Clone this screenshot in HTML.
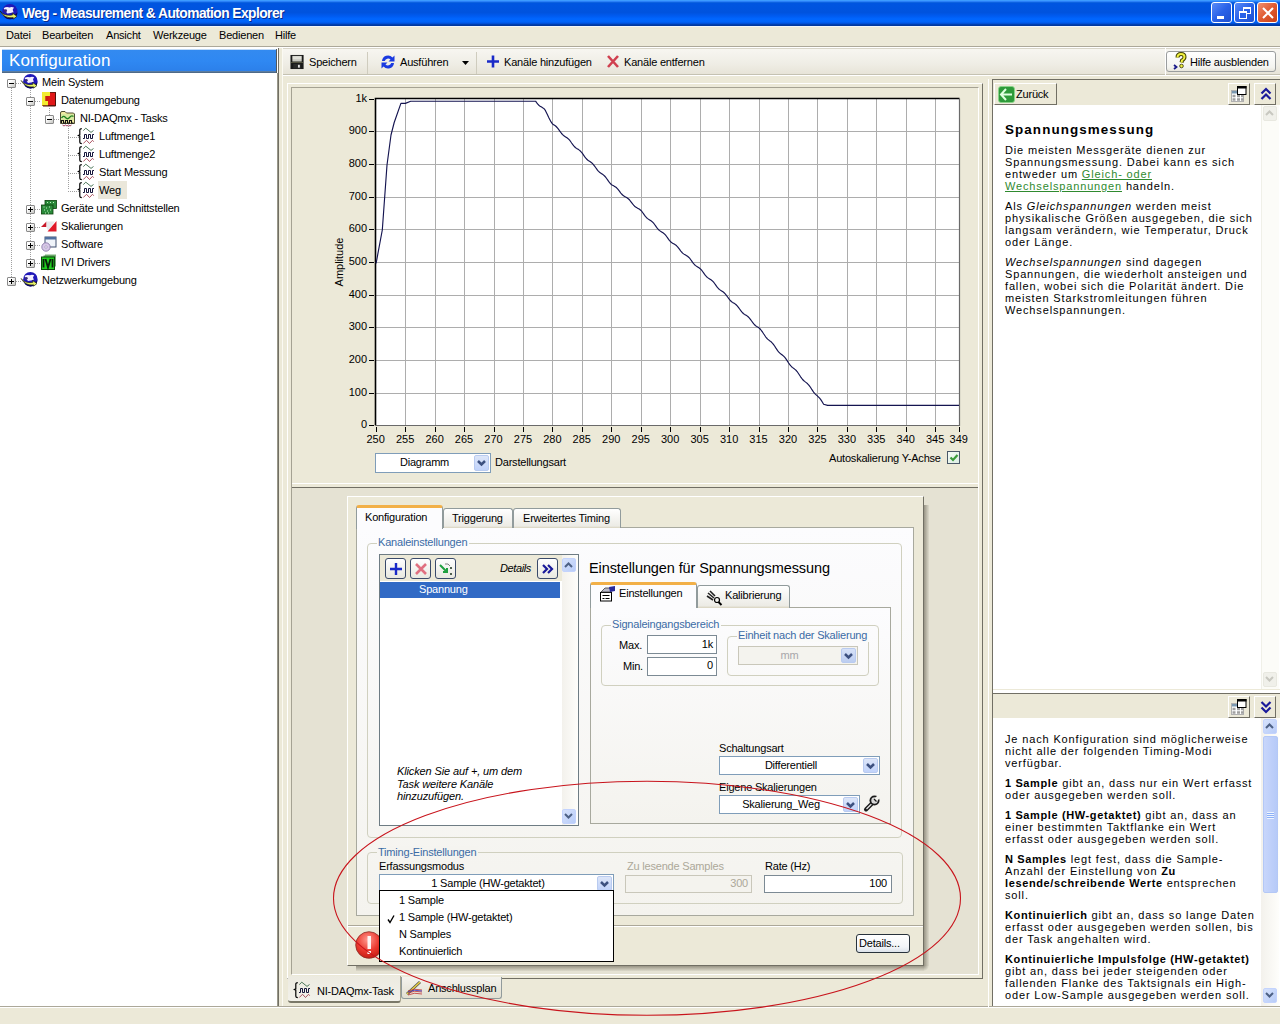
<!DOCTYPE html><html><head><meta charset="utf-8"><title>Weg - Measurement &amp; Automation Explorer</title><style>
*{margin:0;padding:0;box-sizing:border-box}
html,body{width:1280px;height:1024px;overflow:hidden;background:#ECE9D8;font-family:"Liberation Sans",sans-serif;font-size:11px;color:#000}
.ab{position:absolute}
.t{position:absolute;white-space:nowrap;font-size:11px;letter-spacing:-0.2px;line-height:13px}
.hl{position:absolute;white-space:nowrap;font-size:11px;letter-spacing:0.85px;line-height:12px}
.hl b{letter-spacing:0.62px}
svg{position:absolute;overflow:visible}
</style></head><body>
<div class="ab" style="left:0px;top:0px;width:1280px;height:26px;background:linear-gradient(#3D9BFF 0.5px,#2A80F8 1.5px,#0C62E0 2.5px,#0055E0 3.5px,#0053DE 12.5px,#005BF0 16px,#0066FF 19px,#0063F8 22px,#0050D8 23.5px,#0040B0 24.5px,#0038A0 25.5px)"></div>
<svg style="left:1px;top:4px" width="17" height="17" viewBox="0 0 16 16"><circle cx="8.4" cy="7.2" r="7.2" fill="#2018B8"/><path d="M1.5 9 Q8 15 15.5 8 Q15 14.5 8.4 14.4 Q3 14.4 1.5 9Z" fill="#0A0860"/>
<path d="M2.5 4 Q5 2.3 8 3.3 L10 2.8 L12.2 3.3 L11 5.3 L11.8 7.8 L9 8.5 L6 9 L4.5 7 Z" fill="#F4F0FF"/>
<circle cx="4.3" cy="6.3" r="1.4" fill="#3A2A7A"/>
<path d="M-0.8 6.5 Q2 11 9 10.6 L11 10.2 L10.5 8.4 L15 11.6 L11.5 14.2 L11.5 12.8 Q3 14 -0.8 6.5Z" fill="#E8F468" stroke="#1A1A10" stroke-width="0.6"/></svg>
<div class="t" style="left:22px;top:6px;font-weight:bold;font-size:13.8px;color:#fff;letter-spacing:-0.56px;line-height:15px;text-shadow:1px 1px 0 #0A2A8A">Weg - Measurement &amp; Automation Explorer</div>
<div class="ab" style="left:1211px;top:2px;width:21px;height:21px;border:1px solid #fff;border-radius:3px;background:linear-gradient(135deg,#5A8CF8,#2A62E8 50%,#1E50D0)"><div class="ab" style="left:5px;top:13px;width:7px;height:3px;background:#fff"></div></div>
<div class="ab" style="left:1234px;top:2px;width:21px;height:21px;border:1px solid #fff;border-radius:3px;background:linear-gradient(135deg,#5A8CF8,#2A62E8 50%,#1E50D0)"><div class="ab" style="left:8px;top:4px;width:8px;height:7px;border:1px solid #fff;border-top-width:2px"></div><div class="ab" style="left:4px;top:8px;width:8px;height:8px;border:1px solid #fff;border-top-width:2px;background:#2A62E8"></div></div>
<div class="ab" style="left:1257px;top:2px;width:21px;height:21px;border:1px solid #fff;border-radius:3px;background:linear-gradient(135deg,#F09070,#E05A30 50%,#C84018)"><svg style="left:4px;top:4px" width="12" height="12"><path d="M1 1L11 11M11 1L1 11" stroke="#fff" stroke-width="2"/></svg></div>
<div class="ab" style="left:0px;top:26px;width:1280px;height:20px;background:#ECE9D8;border-top:1px solid #F2F6F8"></div>
<div class="t" style="left:6px;top:29px;">Datei</div>
<div class="t" style="left:42px;top:29px;">Bearbeiten</div>
<div class="t" style="left:106px;top:29px;">Ansicht</div>
<div class="t" style="left:153px;top:29px;">Werkzeuge</div>
<div class="t" style="left:219px;top:29px;">Bedienen</div>
<div class="t" style="left:275px;top:29px;">Hilfe</div>
<div class="ab" style="left:0px;top:46px;width:1280px;height:1px;background:#ACA899"></div>
<div class="ab" style="left:0px;top:47px;width:1280px;height:1px;background:#fff"></div>
<div class="ab" style="left:0px;top:48px;width:278px;height:958px;background:#fff"></div>
<div class="ab" style="left:2px;top:49px;width:275px;height:24px;background:linear-gradient(#C0DAF6 0px,#C0DAF6 1px,#338AF0 1px,#2F88F2 12px,#2C80EA 22px,#6A90B8 22px,#4E6A88 23px);border-right:1px solid #50585C"></div>
<div class="t" style="left:9px;top:51px;font-size:17px;letter-spacing:0.1px;line-height:19px;color:#fff">Konfiguration</div>
<div class="ab" style="left:277px;top:73px;width:1px;height:933px;background:#9A988A"></div>
<div class="ab" style="left:278px;top:48px;width:1px;height:958px;background:#716F64"></div>
<div class="ab" style="left:282px;top:48px;width:1px;height:958px;background:#FBFAF3"></div>
<div class="ab" style="left:11px;top:88px;width:1px;height:192px;background:repeating-linear-gradient(#A0A0A0 0 1px,transparent 1px 2px)"></div>
<div class="ab" style="left:30px;top:90px;width:1px;height:172px;background:repeating-linear-gradient(#A0A0A0 0 1px,transparent 1px 2px)"></div>
<div class="ab" style="left:49px;top:108px;width:1px;height:11px;background:repeating-linear-gradient(#A0A0A0 0 1px,transparent 1px 2px)"></div>
<div class="ab" style="left:68px;top:126px;width:1px;height:64px;background:repeating-linear-gradient(#A0A0A0 0 1px,transparent 1px 2px)"></div>
<div class="ab" style="left:16px;top:83px;width:6px;height:1px;background:repeating-linear-gradient(90deg,#A0A0A0 0 1px,transparent 1px 2px)"></div>
<div class="ab" style="left:35px;top:101px;width:6px;height:1px;background:repeating-linear-gradient(90deg,#A0A0A0 0 1px,transparent 1px 2px)"></div>
<div class="ab" style="left:54px;top:119px;width:6px;height:1px;background:repeating-linear-gradient(90deg,#A0A0A0 0 1px,transparent 1px 2px)"></div>
<div class="ab" style="left:68px;top:137px;width:12px;height:1px;background:repeating-linear-gradient(90deg,#A0A0A0 0 1px,transparent 1px 2px)"></div>
<div class="ab" style="left:68px;top:155px;width:12px;height:1px;background:repeating-linear-gradient(90deg,#A0A0A0 0 1px,transparent 1px 2px)"></div>
<div class="ab" style="left:68px;top:173px;width:12px;height:1px;background:repeating-linear-gradient(90deg,#A0A0A0 0 1px,transparent 1px 2px)"></div>
<div class="ab" style="left:68px;top:191px;width:12px;height:1px;background:repeating-linear-gradient(90deg,#A0A0A0 0 1px,transparent 1px 2px)"></div>
<div class="ab" style="left:35px;top:209px;width:6px;height:1px;background:repeating-linear-gradient(90deg,#A0A0A0 0 1px,transparent 1px 2px)"></div>
<div class="ab" style="left:35px;top:227px;width:6px;height:1px;background:repeating-linear-gradient(90deg,#A0A0A0 0 1px,transparent 1px 2px)"></div>
<div class="ab" style="left:35px;top:245px;width:6px;height:1px;background:repeating-linear-gradient(90deg,#A0A0A0 0 1px,transparent 1px 2px)"></div>
<div class="ab" style="left:35px;top:263px;width:6px;height:1px;background:repeating-linear-gradient(90deg,#A0A0A0 0 1px,transparent 1px 2px)"></div>
<div class="ab" style="left:16px;top:281px;width:6px;height:1px;background:repeating-linear-gradient(90deg,#A0A0A0 0 1px,transparent 1px 2px)"></div>
<div class="ab" style="left:7px;top:79px;width:9px;height:9px;border:1px solid #8A8A8A;border-radius:1px;background:linear-gradient(135deg,#fff 30%,#C4C4C0)"><div class="ab" style="left:1px;top:3px;width:5px;height:1px;background:#000"></div></div>
<svg style="left:22px;top:74px" width="16" height="16" viewBox="0 0 16 16"><circle cx="8.4" cy="7.2" r="7.2" fill="#2018B8"/><path d="M1.5 9 Q8 15 15.5 8 Q15 14.5 8.4 14.4 Q3 14.4 1.5 9Z" fill="#0A0860"/>
<path d="M2.5 4 Q5 2.3 8 3.3 L10 2.8 L12.2 3.3 L11 5.3 L11.8 7.8 L9 8.5 L6 9 L4.5 7 Z" fill="#F4F0FF"/>
<circle cx="4.3" cy="6.3" r="1.4" fill="#3A2A7A"/>
<path d="M-0.8 6.5 Q2 11 9 10.6 L11 10.2 L10.5 8.4 L15 11.6 L11.5 14.2 L11.5 12.8 Q3 14 -0.8 6.5Z" fill="#E8F468" stroke="#1A1A10" stroke-width="0.6"/></svg>
<div class="t" style="left:42px;top:76px;">Mein System</div>
<div class="ab" style="left:26px;top:97px;width:9px;height:9px;border:1px solid #8A8A8A;border-radius:1px;background:linear-gradient(135deg,#fff 30%,#C4C4C0)"><div class="ab" style="left:1px;top:3px;width:5px;height:1px;background:#000"></div></div>
<svg style="left:41px;top:92px" width="16" height="16" viewBox="0 0 16 16"><rect x="1.5" y="0.5" width="13" height="13" fill="#E01818" stroke="#6A1A10" stroke-width="1"/><path d="M1 0H9V4H4.5V9H7V13.5H1Z" fill="#F2EC30"/><rect x="4.5" y="4" width="3" height="5" fill="#C82010"/><path d="M14.5 1V14H2" stroke="#501008" stroke-width="1" fill="none"/></svg>
<div class="t" style="left:61px;top:94px;">Datenumgebung</div>
<div class="ab" style="left:45px;top:115px;width:9px;height:9px;border:1px solid #8A8A8A;border-radius:1px;background:linear-gradient(135deg,#fff 30%,#C4C4C0)"><div class="ab" style="left:1px;top:3px;width:5px;height:1px;background:#000"></div></div>
<svg style="left:60px;top:110px" width="16" height="16" viewBox="0 0 16 16"><path d="M0.5 3 Q0.5 1.5 2 1.5 L5 1.5 L6.5 3 L13.5 3 L14.5 4 L14.5 13.5 L0.5 13.5Z" fill="#F0EAA0" stroke="#3A3A20" stroke-width="0.9"/>
<rect x="1" y="4" width="13" height="6" fill="#D8E8A0"/>
<path d="M1.5 8 Q3.5 5 5.5 7.5 T9.5 7.5 T13.5 6.5" stroke="#208020" fill="none" stroke-width="1.3"/>
<path d="M1.5 13 V10.5 H3.5 V13 H5.5 V10.5 H7.5 V13 H9.5 V10.5 H11.5 V13 H13.5" stroke="#101010" fill="none" stroke-width="1.1"/>
<path d="M2.5 15 L4 16 L5.5 15 L7 16 L8.5 15 L10 16 L11.5 15" stroke="#A03050" fill="none" stroke-width="0.9"/></svg>
<div class="t" style="left:80px;top:112px;">NI-DAQmx - Tasks</div>
<svg style="left:79px;top:129px" width="16" height="16" viewBox="0 0 16 16"><path d="M2.8 -0.4 Q0.8 -0.4 0.8 1 V5.8 L-0.6 6.5 L0.8 7.2 V13.2 Q0.8 14.6 2.8 14.6" stroke="#000" fill="none" stroke-width="1.2"/>
<path d="M4.3 1.6 L6.8 -0.8 L12 3.4 L14.5 1.5" stroke="#3A6A4A" fill="none" stroke-width="0.9"/>
<path d="M4 9.5 H5.5 V5.5 H7.5 V9.5 H9.5 V5.5 H11.5 V9.5 H13.5 V5.5 H15" stroke="#14143A" fill="none" stroke-width="1"/>
<path d="M4.3 14.5 L7.5 11.3 L10.5 14.5 L13.5 11.3 L14.7 12.7" stroke="#A04050" fill="none" stroke-width="0.9"/></svg>
<div class="t" style="left:99px;top:130px;">Luftmenge1</div>
<svg style="left:79px;top:147px" width="16" height="16" viewBox="0 0 16 16"><path d="M2.8 -0.4 Q0.8 -0.4 0.8 1 V5.8 L-0.6 6.5 L0.8 7.2 V13.2 Q0.8 14.6 2.8 14.6" stroke="#000" fill="none" stroke-width="1.2"/>
<path d="M4.3 1.6 L6.8 -0.8 L12 3.4 L14.5 1.5" stroke="#3A6A4A" fill="none" stroke-width="0.9"/>
<path d="M4 9.5 H5.5 V5.5 H7.5 V9.5 H9.5 V5.5 H11.5 V9.5 H13.5 V5.5 H15" stroke="#14143A" fill="none" stroke-width="1"/>
<path d="M4.3 14.5 L7.5 11.3 L10.5 14.5 L13.5 11.3 L14.7 12.7" stroke="#A04050" fill="none" stroke-width="0.9"/></svg>
<div class="t" style="left:99px;top:148px;">Luftmenge2</div>
<svg style="left:79px;top:165px" width="16" height="16" viewBox="0 0 16 16"><path d="M2.8 -0.4 Q0.8 -0.4 0.8 1 V5.8 L-0.6 6.5 L0.8 7.2 V13.2 Q0.8 14.6 2.8 14.6" stroke="#000" fill="none" stroke-width="1.2"/>
<path d="M4.3 1.6 L6.8 -0.8 L12 3.4 L14.5 1.5" stroke="#3A6A4A" fill="none" stroke-width="0.9"/>
<path d="M4 9.5 H5.5 V5.5 H7.5 V9.5 H9.5 V5.5 H11.5 V9.5 H13.5 V5.5 H15" stroke="#14143A" fill="none" stroke-width="1"/>
<path d="M4.3 14.5 L7.5 11.3 L10.5 14.5 L13.5 11.3 L14.7 12.7" stroke="#A04050" fill="none" stroke-width="0.9"/></svg>
<div class="t" style="left:99px;top:166px;">Start Messung</div>
<div class="ab" style="left:98px;top:181px;width:29px;height:18px;background:#EAE7DA"></div>
<svg style="left:79px;top:183px" width="16" height="16" viewBox="0 0 16 16"><path d="M2.8 -0.4 Q0.8 -0.4 0.8 1 V5.8 L-0.6 6.5 L0.8 7.2 V13.2 Q0.8 14.6 2.8 14.6" stroke="#000" fill="none" stroke-width="1.2"/>
<path d="M4.3 1.6 L6.8 -0.8 L12 3.4 L14.5 1.5" stroke="#3A6A4A" fill="none" stroke-width="0.9"/>
<path d="M4 9.5 H5.5 V5.5 H7.5 V9.5 H9.5 V5.5 H11.5 V9.5 H13.5 V5.5 H15" stroke="#14143A" fill="none" stroke-width="1"/>
<path d="M4.3 14.5 L7.5 11.3 L10.5 14.5 L13.5 11.3 L14.7 12.7" stroke="#A04050" fill="none" stroke-width="0.9"/></svg>
<div class="t" style="left:99px;top:184px;">Weg</div>
<div class="ab" style="left:26px;top:205px;width:9px;height:9px;border:1px solid #8A8A8A;border-radius:1px;background:linear-gradient(135deg,#fff 30%,#C4C4C0)"><div class="ab" style="left:1px;top:3px;width:5px;height:1px;background:#000"></div><div class="ab" style="left:3px;top:1px;width:1px;height:5px;background:#000"></div></div>
<svg style="left:41px;top:200px" width="16" height="16" viewBox="0 0 16 16"><rect x="4" y="0.5" width="11.5" height="8" fill="#2A8A3A" stroke="#0A400A" stroke-width="0.8"/><rect x="0.5" y="5" width="11.5" height="9" fill="#2A8A3A" stroke="#0A400A" stroke-width="0.8"/>
<path d="M6 2.5h1M9 2.5h1M12 2.5h1M2.5 7h1M5 8h1M8 7h1M3 10h1M6 11h1M9 10h1M4 13h1M7 13h1" stroke="#C0F0C0" stroke-width="1"/></svg>
<div class="t" style="left:61px;top:202px;">Geräte und Schnittstellen</div>
<div class="ab" style="left:26px;top:223px;width:9px;height:9px;border:1px solid #8A8A8A;border-radius:1px;background:linear-gradient(135deg,#fff 30%,#C4C4C0)"><div class="ab" style="left:1px;top:3px;width:5px;height:1px;background:#000"></div><div class="ab" style="left:3px;top:1px;width:1px;height:5px;background:#000"></div></div>
<svg style="left:41px;top:218px" width="16" height="16" viewBox="0 0 16 16"><path d="M0 9 L5.5 3.5 L5.5 9Z" fill="#C81828"/><path d="M5.5 9 L5.5 3.5 L14 3.5 L7 13Z" fill="#E8E8EC"/><path d="M6.5 13.5 L15.5 3 L15.5 13.5Z" fill="#E01828"/></svg>
<div class="t" style="left:61px;top:220px;">Skalierungen</div>
<div class="ab" style="left:26px;top:241px;width:9px;height:9px;border:1px solid #8A8A8A;border-radius:1px;background:linear-gradient(135deg,#fff 30%,#C4C4C0)"><div class="ab" style="left:1px;top:3px;width:5px;height:1px;background:#000"></div><div class="ab" style="left:3px;top:1px;width:1px;height:5px;background:#000"></div></div>
<svg style="left:41px;top:236px" width="16" height="16" viewBox="0 0 16 16"><rect x="4" y="1" width="11" height="10" fill="#F0F4FA" stroke="#405070" stroke-width="1"/><rect x="4" y="1" width="11" height="2.5" fill="#5070A0"/>
<circle cx="5" cy="11" r="4.2" fill="#D8C8E8" stroke="#8070A0" stroke-width="0.8"/><circle cx="5" cy="11" r="1.2" fill="#fff" stroke="#8070A0" stroke-width="0.5"/></svg>
<div class="t" style="left:61px;top:238px;">Software</div>
<div class="ab" style="left:26px;top:259px;width:9px;height:9px;border:1px solid #8A8A8A;border-radius:1px;background:linear-gradient(135deg,#fff 30%,#C4C4C0)"><div class="ab" style="left:1px;top:3px;width:5px;height:1px;background:#000"></div><div class="ab" style="left:3px;top:1px;width:1px;height:5px;background:#000"></div></div>
<svg style="left:41px;top:254px" width="16" height="16" viewBox="0 0 16 16"><rect x="4" y="0.5" width="11" height="12" fill="#7AB07A"/><rect x="2.5" y="1.5" width="11" height="12" fill="#5AA05A"/><rect x="0.5" y="3" width="13" height="12.5" fill="#20D020" stroke="#0A4A0A" stroke-width="1"/>
<path d="M2.5 5V13.5M4.5 5L7 13.5L9.5 5M11.5 5V13.5" stroke="#0A200A" stroke-width="1.8" fill="none"/></svg>
<div class="t" style="left:61px;top:256px;">IVI Drivers</div>
<div class="ab" style="left:7px;top:277px;width:9px;height:9px;border:1px solid #8A8A8A;border-radius:1px;background:linear-gradient(135deg,#fff 30%,#C4C4C0)"><div class="ab" style="left:1px;top:3px;width:5px;height:1px;background:#000"></div><div class="ab" style="left:3px;top:1px;width:1px;height:5px;background:#000"></div></div>
<svg style="left:22px;top:272px" width="16" height="16" viewBox="0 0 16 16"><circle cx="8.4" cy="7.2" r="7.2" fill="#2018B8"/><path d="M1.5 9 Q8 15 15.5 8 Q15 14.5 8.4 14.4 Q3 14.4 1.5 9Z" fill="#0A0860"/>
<path d="M2.5 4 Q5 2.3 8 3.3 L10 2.8 L12.2 3.3 L11 5.3 L11.8 7.8 L9 8.5 L6 9 L4.5 7 Z" fill="#F4F0FF"/>
<circle cx="4.3" cy="6.3" r="1.4" fill="#3A2A7A"/>
<path d="M-0.8 6.5 Q2 11 9 10.6 L11 10.2 L10.5 8.4 L15 11.6 L11.5 14.2 L11.5 12.8 Q3 14 -0.8 6.5Z" fill="#E8F468" stroke="#1A1A10" stroke-width="0.6"/></svg>
<div class="t" style="left:42px;top:274px;">Netzwerkumgebung</div>
<div class="ab" style="left:283px;top:48px;width:997px;height:27px;background:linear-gradient(#F7F6F1,#EFEDE5 60%,#E7E4D8);border-top:1px solid #D8D5C8;border-bottom:1px solid #C5C2B2"></div>
<div class="ab" style="left:283px;top:75px;width:997px;height:1px;background:#fff"></div>
<svg style="left:290px;top:54px" width="15" height="16" viewBox="0 0 16 16"><rect x="0.5" y="0.5" width="14" height="15" fill="#1A1A1A"/><rect x="2.5" y="1.5" width="10" height="6" fill="#C8C8C0"/><rect x="3" y="2" width="9" height="3" fill="#E0E0D8"/>
<rect x="3.5" y="10" width="8" height="5" fill="#2A2A2A"/><rect x="8.5" y="11" width="2" height="3" fill="#E0E0E0"/><path d="M1 8.5H14" stroke="#6A6A50" stroke-width="0.8"/></svg>
<div class="t" style="left:309px;top:56px;">Speichern</div>
<div class="ab" style="left:367px;top:52px;width:1px;height:22px;background:#CFCCBE"></div>
<svg style="left:380px;top:54px" width="16" height="16" viewBox="0 0 16 16"><path d="M2 7 A6 6 0 0 1 12.5 3.5 L14.5 1.5 L14.5 7.5 L8.5 7.5 L10.5 5.5 A3.5 3.5 0 0 0 4.8 7Z" fill="#1A3AE0"/>
<path d="M14 9 A6 6 0 0 1 3.5 12.5 L1.5 14.5 L1.5 8.5 L7.5 8.5 L5.5 10.5 A3.5 3.5 0 0 0 11.2 9Z" fill="#1A3AE0"/></svg>
<div class="t" style="left:400px;top:56px;">Ausführen</div>
<svg style="left:462px;top:61px" width="7" height="4"><path d="M0 0H7L3.5 4Z" fill="#000"/></svg>
<div class="ab" style="left:476px;top:52px;width:1px;height:22px;background:#CFCCBE"></div>
<svg style="left:486px;top:54px" width="16" height="16" viewBox="0 0 16 16"><path d="M7 1.5V13.5M1 7.5H13" stroke="#1A2AC8" stroke-width="2.6"/></svg>
<div class="t" style="left:504px;top:56px;">Kanäle hinzufügen</div>
<svg style="left:606px;top:54px" width="16" height="16" viewBox="0 0 16 16"><path d="M2 2L12 13M12 2L2 13" stroke="#D04050" stroke-width="2.6"/></svg>
<div class="t" style="left:624px;top:56px;">Kanäle entfernen</div>
<div class="ab" style="left:1165px;top:48px;width:1px;height:27px;background:#fff"></div>
<div class="ab" style="left:1166px;top:51px;width:110px;height:21px;border:1px solid #9A9D9E;border-radius:3px;background:linear-gradient(#FFFFFF,#F4F4F0 80%,#E8E6DC)"></div>
<svg style="left:1170px;top:53px" width="16" height="16" viewBox="0 0 16 16"><path d="M4 12 L6.5 14 L4 16" stroke="#1A1A8A" stroke-width="1.8" fill="none"/>
<path d="M7.5 4.5 Q7.5 1 11 1 Q14.5 1 14.5 4 Q14.5 6 12 7.5 L11.5 9.5" stroke="#404000" stroke-width="4" fill="none"/>
<path d="M7.5 4.5 Q7.5 1 11 1 Q14.5 1 14.5 4 Q14.5 6 12 7.5 L11.5 9.5" stroke="#F0F040" stroke-width="2" fill="none"/>
<circle cx="11.5" cy="13" r="1.8" fill="#F0F040" stroke="#303000" stroke-width="0.8"/></svg>
<div class="t" style="left:1190px;top:56px;">Hilfe ausblenden</div>
<div class="ab" style="left:287px;top:83px;width:696px;height:896px;border-top:1px solid #fff;border-left:1px solid #fff;border-right:1px solid #716F64;border-bottom:1px solid #716F64"></div>
<div class="ab" style="left:291px;top:87px;width:688px;height:888px;border-top:1px solid #A5A293;border-left:1px solid #A5A293;border-right:1px solid #fff;border-bottom:1px solid #fff"></div>
<div class="ab" style="left:292px;top:483px;width:686px;height:1px;background:#fff"></div>
<div class="ab" style="left:292px;top:487px;width:686px;height:1px;background:#716F64"></div>
<div class="ab" style="left:292px;top:488px;width:686px;height:486px;background:#E5E2D3"></div>
<div class="ab" style="left:0px;top:1006px;width:1280px;height:1px;background:#ACA899"></div>
<div class="ab" style="left:0px;top:1007px;width:1280px;height:17px;background:#ECE9D8;border-top:1px solid #fff"></div>
<svg style="left:0;top:0" width="1280" height="1024"><rect x="375.5" y="98.5" width="584" height="327" fill="#fff"/><line x1="405.5" y1="99" x2="405.5" y2="425" stroke="#ADADAD" stroke-width="1"/><line x1="435.5" y1="99" x2="435.5" y2="425" stroke="#ADADAD" stroke-width="1"/><line x1="464.5" y1="99" x2="464.5" y2="425" stroke="#ADADAD" stroke-width="1"/><line x1="494.5" y1="99" x2="494.5" y2="425" stroke="#ADADAD" stroke-width="1"/><line x1="523.5" y1="99" x2="523.5" y2="425" stroke="#ADADAD" stroke-width="1"/><line x1="552.5" y1="99" x2="552.5" y2="425" stroke="#ADADAD" stroke-width="1"/><line x1="582.5" y1="99" x2="582.5" y2="425" stroke="#ADADAD" stroke-width="1"/><line x1="611.5" y1="99" x2="611.5" y2="425" stroke="#ADADAD" stroke-width="1"/><line x1="641.5" y1="99" x2="641.5" y2="425" stroke="#ADADAD" stroke-width="1"/><line x1="670.5" y1="99" x2="670.5" y2="425" stroke="#ADADAD" stroke-width="1"/><line x1="700.5" y1="99" x2="700.5" y2="425" stroke="#ADADAD" stroke-width="1"/><line x1="729.5" y1="99" x2="729.5" y2="425" stroke="#ADADAD" stroke-width="1"/><line x1="759.5" y1="99" x2="759.5" y2="425" stroke="#ADADAD" stroke-width="1"/><line x1="788.5" y1="99" x2="788.5" y2="425" stroke="#ADADAD" stroke-width="1"/><line x1="817.5" y1="99" x2="817.5" y2="425" stroke="#ADADAD" stroke-width="1"/><line x1="847.5" y1="99" x2="847.5" y2="425" stroke="#ADADAD" stroke-width="1"/><line x1="876.5" y1="99" x2="876.5" y2="425" stroke="#ADADAD" stroke-width="1"/><line x1="906.5" y1="99" x2="906.5" y2="425" stroke="#ADADAD" stroke-width="1"/><line x1="935.5" y1="99" x2="935.5" y2="425" stroke="#ADADAD" stroke-width="1"/><line x1="376" y1="393.5" x2="959" y2="393.5" stroke="#ADADAD" stroke-width="1"/><line x1="376" y1="360.5" x2="959" y2="360.5" stroke="#ADADAD" stroke-width="1"/><line x1="376" y1="327.5" x2="959" y2="327.5" stroke="#ADADAD" stroke-width="1"/><line x1="376" y1="295.5" x2="959" y2="295.5" stroke="#ADADAD" stroke-width="1"/><line x1="376" y1="262.5" x2="959" y2="262.5" stroke="#ADADAD" stroke-width="1"/><line x1="376" y1="229.5" x2="959" y2="229.5" stroke="#ADADAD" stroke-width="1"/><line x1="376" y1="197.5" x2="959" y2="197.5" stroke="#ADADAD" stroke-width="1"/><line x1="376" y1="164.5" x2="959" y2="164.5" stroke="#ADADAD" stroke-width="1"/><line x1="376" y1="131.5" x2="959" y2="131.5" stroke="#ADADAD" stroke-width="1"/><path d="M375.5 425.5 V98.5 H959.5" stroke="#000" stroke-width="1.6" fill="none"/><path d="M959.5 98.5 V425.5 H375.5" stroke="#6A6A6A" stroke-width="1.2" fill="none"/><line x1="369" y1="425.5" x2="374" y2="425.5" stroke="#000" stroke-width="1"/><line x1="369" y1="393.5" x2="374" y2="393.5" stroke="#000" stroke-width="1"/><line x1="369" y1="360.5" x2="374" y2="360.5" stroke="#000" stroke-width="1"/><line x1="369" y1="327.5" x2="374" y2="327.5" stroke="#000" stroke-width="1"/><line x1="369" y1="295.5" x2="374" y2="295.5" stroke="#000" stroke-width="1"/><line x1="369" y1="262.5" x2="374" y2="262.5" stroke="#000" stroke-width="1"/><line x1="369" y1="229.5" x2="374" y2="229.5" stroke="#000" stroke-width="1"/><line x1="369" y1="197.5" x2="374" y2="197.5" stroke="#000" stroke-width="1"/><line x1="369" y1="164.5" x2="374" y2="164.5" stroke="#000" stroke-width="1"/><line x1="369" y1="131.5" x2="374" y2="131.5" stroke="#000" stroke-width="1"/><line x1="369" y1="99.5" x2="374" y2="99.5" stroke="#000" stroke-width="1"/><line x1="376.5" y1="427" x2="376.5" y2="432" stroke="#000" stroke-width="1"/><line x1="405.5" y1="427" x2="405.5" y2="432" stroke="#000" stroke-width="1"/><line x1="435.5" y1="427" x2="435.5" y2="432" stroke="#000" stroke-width="1"/><line x1="464.5" y1="427" x2="464.5" y2="432" stroke="#000" stroke-width="1"/><line x1="494.5" y1="427" x2="494.5" y2="432" stroke="#000" stroke-width="1"/><line x1="523.5" y1="427" x2="523.5" y2="432" stroke="#000" stroke-width="1"/><line x1="552.5" y1="427" x2="552.5" y2="432" stroke="#000" stroke-width="1"/><line x1="582.5" y1="427" x2="582.5" y2="432" stroke="#000" stroke-width="1"/><line x1="611.5" y1="427" x2="611.5" y2="432" stroke="#000" stroke-width="1"/><line x1="641.5" y1="427" x2="641.5" y2="432" stroke="#000" stroke-width="1"/><line x1="670.5" y1="427" x2="670.5" y2="432" stroke="#000" stroke-width="1"/><line x1="700.5" y1="427" x2="700.5" y2="432" stroke="#000" stroke-width="1"/><line x1="729.5" y1="427" x2="729.5" y2="432" stroke="#000" stroke-width="1"/><line x1="759.5" y1="427" x2="759.5" y2="432" stroke="#000" stroke-width="1"/><line x1="788.5" y1="427" x2="788.5" y2="432" stroke="#000" stroke-width="1"/><line x1="817.5" y1="427" x2="817.5" y2="432" stroke="#000" stroke-width="1"/><line x1="847.5" y1="427" x2="847.5" y2="432" stroke="#000" stroke-width="1"/><line x1="876.5" y1="427" x2="876.5" y2="432" stroke="#000" stroke-width="1"/><line x1="906.5" y1="427" x2="906.5" y2="432" stroke="#000" stroke-width="1"/><line x1="935.5" y1="427" x2="935.5" y2="432" stroke="#000" stroke-width="1"/><line x1="959.5" y1="427" x2="959.5" y2="432" stroke="#000" stroke-width="1"/><path d="M376.1 263.3 L382.3 230.0 L387.0 165.0 L391.0 135.0 L394.2 122.5 L400.9 103.4 L405.4 103.4 L410.7 101.2 L535.6 101.2 L536.6 102.6 L537.6 103.9 L538.6 105.0 L539.6 105.9 L540.6 106.5 L541.6 107.1 L542.6 107.7 L543.6 108.4 L544.6 109.3 L545.6 110.9 L546.6 112.9 L547.6 115.0 L548.6 117.2 L549.6 119.2 L550.6 121.1 L551.6 122.7 L552.6 124.1 L553.6 124.7 L554.6 125.3 L555.6 126.0 L556.6 127.0 L557.6 128.1 L558.6 129.4 L559.6 130.8 L560.6 132.2 L561.6 133.5 L562.6 134.6 L563.6 135.5 L564.6 136.3 L565.6 136.9 L566.6 137.5 L567.6 138.2 L568.6 139.1 L569.6 140.2 L570.6 141.5 L571.6 143.0 L572.6 144.4 L573.6 145.7 L574.6 146.8 L575.6 147.7 L576.6 148.4 L577.6 149.0 L578.6 149.6 L579.6 150.4 L580.6 151.3 L581.6 152.4 L582.6 153.7 L583.6 155.1 L584.6 156.6 L585.6 157.9 L586.6 159.0 L587.6 160.0 L588.6 160.7 L589.6 161.3 L590.6 162.0 L591.6 162.7 L592.6 163.6 L593.6 164.8 L594.6 166.1 L595.6 167.5 L596.6 168.9 L597.6 170.3 L598.6 171.4 L599.6 172.3 L600.6 173.1 L601.6 173.7 L602.6 174.3 L603.6 175.1 L604.6 176.0 L605.6 177.1 L606.6 178.5 L607.6 179.9 L608.6 181.3 L609.6 182.6 L610.6 183.8 L611.6 184.7 L612.6 185.3 L613.6 185.8 L614.6 186.4 L615.6 187.0 L616.6 187.8 L617.6 188.9 L618.6 190.1 L619.6 191.4 L620.6 192.8 L621.6 194.0 L622.6 195.0 L623.6 195.8 L624.6 196.5 L625.6 197.0 L626.6 197.5 L627.6 198.2 L628.6 199.0 L629.6 200.0 L630.6 201.3 L631.6 202.6 L632.6 203.9 L633.6 205.1 L634.6 206.2 L635.6 207.0 L636.6 207.6 L637.6 208.2 L638.6 208.7 L639.6 209.3 L640.6 210.2 L641.6 211.2 L642.6 212.5 L643.6 213.9 L644.6 215.3 L645.6 216.6 L646.6 217.7 L647.6 218.6 L648.6 219.3 L649.6 219.9 L650.6 220.5 L651.6 221.2 L652.6 222.1 L653.6 223.2 L654.6 224.5 L655.6 225.9 L656.6 227.3 L657.6 228.6 L658.6 229.7 L659.6 230.6 L660.6 231.3 L661.6 231.9 L662.6 232.5 L663.6 233.2 L664.6 234.1 L665.6 235.2 L666.6 236.5 L667.6 237.9 L668.6 239.3 L669.6 240.6 L670.6 241.7 L671.6 242.5 L672.6 243.2 L673.6 243.7 L674.6 244.3 L675.6 244.9 L676.6 245.8 L677.6 246.8 L678.6 248.1 L679.6 249.4 L680.6 250.8 L681.6 252.0 L682.6 253.1 L683.6 253.9 L684.6 254.6 L685.6 255.1 L686.6 255.7 L687.6 256.3 L688.6 257.2 L689.6 258.2 L690.6 259.5 L691.6 260.9 L692.6 262.3 L693.6 263.6 L694.6 264.7 L695.6 265.6 L696.6 266.3 L697.6 266.9 L698.6 267.5 L699.6 268.2 L700.6 269.1 L701.6 270.2 L702.6 271.5 L703.6 272.9 L704.6 274.3 L705.6 275.6 L706.6 276.7 L707.6 277.6 L708.6 278.3 L709.6 278.9 L710.6 279.5 L711.6 280.2 L712.6 281.1 L713.6 282.2 L714.6 283.5 L715.6 284.9 L716.6 286.3 L717.6 287.6 L718.6 288.7 L719.6 289.6 L720.6 290.3 L721.6 290.9 L722.6 291.5 L723.6 292.3 L724.6 293.2 L725.6 294.3 L726.6 295.6 L727.6 297.0 L728.6 298.4 L729.6 299.7 L730.6 300.8 L731.6 301.7 L732.6 302.4 L733.6 303.0 L734.6 303.6 L735.6 304.3 L736.6 305.2 L737.6 306.3 L738.6 307.6 L739.6 309.0 L740.6 310.4 L741.6 311.7 L742.6 312.8 L743.6 313.7 L744.6 314.4 L745.6 315.0 L746.6 315.6 L747.6 316.3 L748.6 317.2 L749.6 318.3 L750.6 319.6 L751.6 321.0 L752.6 322.4 L753.6 323.7 L754.6 324.8 L755.6 325.7 L756.6 326.4 L757.6 327.0 L758.6 327.6 L759.6 328.5 L760.6 329.5 L761.6 330.8 L762.6 332.2 L763.6 333.8 L764.6 335.3 L765.6 336.8 L766.6 338.0 L767.6 339.1 L768.6 339.9 L769.6 340.7 L770.6 341.4 L771.6 342.3 L772.6 343.3 L773.6 344.6 L774.6 346.0 L775.6 347.6 L776.6 349.1 L777.6 350.6 L778.6 351.8 L779.6 352.9 L780.6 353.8 L781.6 354.5 L782.6 355.3 L783.6 356.1 L784.6 357.2 L785.6 358.4 L786.6 359.9 L787.6 361.4 L788.6 363.0 L789.6 364.4 L790.6 365.7 L791.6 366.7 L792.6 367.6 L793.6 368.3 L794.6 369.1 L795.6 369.9 L796.6 371.0 L797.6 372.2 L798.6 373.7 L799.6 375.2 L800.6 376.8 L801.6 378.2 L802.6 379.5 L803.6 380.5 L804.6 381.4 L805.6 382.1 L806.6 382.9 L807.6 383.8 L808.6 384.8 L809.6 386.1 L810.6 387.5 L811.6 389.1 L812.6 390.6 L813.6 392.1 L814.6 393.3 L815.6 394.4 L816.6 395.2 L817.6 396.2 L818.6 397.1 L819.6 398.2 L820.6 399.4 L821.6 400.9 L822.6 402.5 L823.6 404.3 L827.6 405.4 L959.0 405.4" stroke="#141450" stroke-width="1.15" fill="none" stroke-linejoin="round"/></svg>
<div class="t" style="left:300px;top:418px;width:67px;text-align:right;letter-spacing:0">0</div>
<div class="t" style="left:300px;top:386px;width:67px;text-align:right;letter-spacing:0">100</div>
<div class="t" style="left:300px;top:353px;width:67px;text-align:right;letter-spacing:0">200</div>
<div class="t" style="left:300px;top:320px;width:67px;text-align:right;letter-spacing:0">300</div>
<div class="t" style="left:300px;top:288px;width:67px;text-align:right;letter-spacing:0">400</div>
<div class="t" style="left:300px;top:255px;width:67px;text-align:right;letter-spacing:0">500</div>
<div class="t" style="left:300px;top:222px;width:67px;text-align:right;letter-spacing:0">600</div>
<div class="t" style="left:300px;top:190px;width:67px;text-align:right;letter-spacing:0">700</div>
<div class="t" style="left:300px;top:157px;width:67px;text-align:right;letter-spacing:0">800</div>
<div class="t" style="left:300px;top:124px;width:67px;text-align:right;letter-spacing:0">900</div>
<div class="t" style="left:300px;top:92px;width:67px;text-align:right;letter-spacing:0">1k</div>
<div class="t" style="left:355.7px;top:433px;width:40px;text-align:center;letter-spacing:0">250</div>
<div class="t" style="left:385.1px;top:433px;width:40px;text-align:center;letter-spacing:0">255</div>
<div class="t" style="left:414.6px;top:433px;width:40px;text-align:center;letter-spacing:0">260</div>
<div class="t" style="left:444.0px;top:433px;width:40px;text-align:center;letter-spacing:0">265</div>
<div class="t" style="left:473.5px;top:433px;width:40px;text-align:center;letter-spacing:0">270</div>
<div class="t" style="left:503.0px;top:433px;width:40px;text-align:center;letter-spacing:0">275</div>
<div class="t" style="left:532.4px;top:433px;width:40px;text-align:center;letter-spacing:0">280</div>
<div class="t" style="left:561.8px;top:433px;width:40px;text-align:center;letter-spacing:0">285</div>
<div class="t" style="left:591.3px;top:433px;width:40px;text-align:center;letter-spacing:0">290</div>
<div class="t" style="left:620.8px;top:433px;width:40px;text-align:center;letter-spacing:0">295</div>
<div class="t" style="left:650.2px;top:433px;width:40px;text-align:center;letter-spacing:0">300</div>
<div class="t" style="left:679.6px;top:433px;width:40px;text-align:center;letter-spacing:0">305</div>
<div class="t" style="left:709.1px;top:433px;width:40px;text-align:center;letter-spacing:0">310</div>
<div class="t" style="left:738.5px;top:433px;width:40px;text-align:center;letter-spacing:0">315</div>
<div class="t" style="left:768.0px;top:433px;width:40px;text-align:center;letter-spacing:0">320</div>
<div class="t" style="left:797.5px;top:433px;width:40px;text-align:center;letter-spacing:0">325</div>
<div class="t" style="left:826.9px;top:433px;width:40px;text-align:center;letter-spacing:0">330</div>
<div class="t" style="left:856.3px;top:433px;width:40px;text-align:center;letter-spacing:0">335</div>
<div class="t" style="left:885.8px;top:433px;width:40px;text-align:center;letter-spacing:0">340</div>
<div class="t" style="left:915.2px;top:433px;width:40px;text-align:center;letter-spacing:0">345</div>
<div class="t" style="left:938.8px;top:433px;width:40px;text-align:center;letter-spacing:0">349</div>
<div class="t" style="left:339px;top:262px;transform:translate(-50%,-50%) rotate(-90deg);letter-spacing:0">Amplitude</div>
<div class="ab" style="left:375px;top:453px;width:116px;height:20px;border:1px solid #7F9DB9;background:#fff"><div class="t" style="left:0;top:2px;width:97px;text-align:center;color:#000">Diagramm</div><div class="ab" style="left:98px;top:1px;width:15px;height:16px;background:linear-gradient(#DDE6F8,#C1D3FB);border-radius:2px;border:1px solid #B9CBF0"><svg style="left:2px;top:4px" width="9" height="6"><path d="M1 1L4.5 4.5L8 1" stroke="#3D5180" stroke-width="2.5" fill="none"/></svg></div></div>
<div class="t" style="left:495px;top:456px;">Darstellungsart</div>
<div class="t" style="left:829px;top:452px;">Autoskalierung Y-Achse</div>
<div class="ab" style="left:947px;top:451px;width:13px;height:13px;border:1px solid #4A5868;background:linear-gradient(135deg,#F4FAF4,#DCEEE4)">
<svg style="left:2px;top:2px" width="8" height="8"><path d="M0.5 3.5L3 6L7.5 1" stroke="#3A9A3A" stroke-width="2.2" fill="none"/></svg></div>
<div class="ab" style="left:924px;top:505px;width:5px;height:461px;background:linear-gradient(90deg,rgba(60,55,40,0.45),rgba(60,55,40,0.05))"></div>
<div class="ab" style="left:356px;top:966px;width:568px;height:5px;background:linear-gradient(rgba(60,55,40,0.45),rgba(60,55,40,0.05))"></div>
<div class="ab" style="left:924px;top:966px;width:5px;height:5px;background:radial-gradient(circle at 0 0,rgba(60,55,40,0.4),rgba(60,55,40,0) 5px)"></div>
<div class="ab" style="left:347px;top:496px;width:577px;height:470px;background:#ECE9D8;border-top:1px solid #fff;border-left:1px solid #fff;border-right:1px solid #716F64;border-bottom:1px solid #716F64"></div>
<div class="ab" style="left:356px;top:527px;width:558px;height:389px;border:1px solid #A8A99E;background:linear-gradient(#FCFCFE,#F4F3EE)"></div>
<div class="ab" style="left:356px;top:505px;width:87px;height:24px;border:1px solid #919B9C;border-bottom:none;border-radius:3px 3px 0 0;background:#FCFCFE;border-top:3px solid #F2B048;z-index:2"><div class="t" style="left:8px;top:3px">Konfiguration</div></div>
<div class="ab" style="left:443px;top:508px;width:70px;height:20px;border:1px solid #919B9C;border-bottom:none;border-radius:3px 3px 0 0;background:linear-gradient(#FFFFFF,#ECEBE5 90%,#D8D2BD)"><div class="t" style="left:8px;top:3px">Triggerung</div></div>
<div class="ab" style="left:513px;top:508px;width:108px;height:20px;border:1px solid #919B9C;border-bottom:none;border-radius:3px 3px 0 0;background:linear-gradient(#FFFFFF,#ECEBE5 90%,#D8D2BD)"><div class="t" style="left:9px;top:3px">Erweitertes Timing</div></div>
<div class="ab" style="left:367px;top:543px;width:535px;height:295px;border:1px solid #D0D0BF;border-radius:4px"></div>
<div class="t" style="left:377px;top:536px;color:#3B6BA5;background:#FCFCFD;padding:0 2px 0 1px">Kanaleinstellungen</div>
<div class="ab" style="left:379px;top:554px;width:200px;height:272px;border:1px solid #6E7C84;background:#fff"></div>
<div class="ab" style="left:380px;top:555px;width:182px;height:26px;background:#ECE9D8"></div>
<div class="ab" style="left:385px;top:558px;width:21px;height:21px;border:1px solid #3A4A6A;border-radius:3px;background:linear-gradient(#FFFFFF,#E8E8E0)"><svg style="left:3px;top:3px" width="14" height="14"><path d="M7 1V13M1 7H13" stroke="#1A2AC8" stroke-width="2.4"/></svg></div>
<div class="ab" style="left:410px;top:558px;width:21px;height:21px;border:1px solid #3A4A6A;border-radius:3px;background:linear-gradient(#FFFFFF,#E8E8E0)"><svg style="left:3px;top:3px" width="14" height="14"><path d="M2 2L12 12M12 2L2 12" stroke="#E07080" stroke-width="2.6"/></svg></div>
<div class="ab" style="left:435px;top:558px;width:21px;height:21px;border:1px solid #3A4A6A;border-radius:3px;background:linear-gradient(#FFFFFF,#E8E8E0)"><svg style="left:3px;top:3px" width="14" height="14"><path d="M1 3L8 10M4 10H8V6" stroke="#20A040" stroke-width="2" fill="none"/><path d="M6 2H9L11 4" stroke="#808080" stroke-width="1" fill="none"/><rect x="11" y="11" width="2" height="2" fill="#506050"/><rect x="11" y="5" width="2" height="2" fill="#506050"/></svg></div>
<div class="t" style="left:500px;top:562px;font-style:italic;letter-spacing:-0.4px">Details</div>
<div class="ab" style="left:537px;top:558px;width:21px;height:21px;border:1px solid #3A4A6A;border-radius:3px;background:linear-gradient(#FFFFFF,#E8E8E0)"><svg style="left:3px;top:3px" width="14" height="14"><path d="M2 3L6 7L2 11M7 3L11 7L7 11" stroke="#1A1A9A" stroke-width="2.2" fill="none"/></svg></div>
<div class="ab" style="left:562px;top:555px;width:16px;height:270px;background:linear-gradient(90deg,#F3F1EC,#FEFEFB)"></div>
<div class="ab" style="left:562px;top:558px;width:14px;height:14px;border:1px solid #C3D3FD;border-radius:2px;background:linear-gradient(135deg,#D6E2FC,#B8CCF8)"><svg style="left:0px;top:2px" width="11" height="8"><path d="M2 6L5.5 2.5L9 6" stroke="#4D6185" stroke-width="2" fill="none"/></svg></div>
<div class="ab" style="left:562px;top:809px;width:14px;height:15px;border:1px solid #C3D3FD;border-radius:2px;background:linear-gradient(135deg,#D6E2FC,#B8CCF8)"><svg style="left:0px;top:2px" width="11" height="8"><path d="M2 2L5.5 5.5L9 2" stroke="#4D6185" stroke-width="2" fill="none"/></svg></div>
<div class="ab" style="left:380px;top:582px;width:180px;height:16px;background:#316AC5"></div>
<div class="t" style="left:419px;top:583px;color:#fff">Spannung</div>
<div class="t" style="left:397px;top:765.0px;font-style:italic;letter-spacing:-0.12px">Klicken Sie auf +, um dem</div>
<div class="t" style="left:397px;top:777.7px;font-style:italic;letter-spacing:-0.12px">Task weitere Kanäle</div>
<div class="t" style="left:397px;top:790.4px;font-style:italic;letter-spacing:-0.12px">hinzuzufügen.</div>
<div class="t" style="left:589px;top:560px;font-size:14.5px;letter-spacing:-0.1px;line-height:16px">Einstellungen für Spannungsmessung</div>
<div class="ab" style="left:590px;top:607px;width:301px;height:217px;border:1px solid #A8A99E;background:linear-gradient(#FCFCFE,#F4F3EE)"></div>
<div class="ab" style="left:590px;top:582px;width:107px;height:26px;border:1px solid #919B9C;border-bottom:none;border-radius:3px 3px 0 0;background:#FCFCFE;border-top:3px solid #F2B048;z-index:2"><svg style="left:9px;top:1px" width="17" height="16" viewBox="0 0 17 16"><rect x="0.5" y="6.5" width="11" height="8.5" fill="#fff" stroke="#000"/><path d="M2.5 9.5h7M2.5 12.5h2M5.5 12.5h4" stroke="#000" stroke-width="1.2"/><path d="M1 6 L5 2 L9 2 L11 4 L11 6Z" fill="#B8B8C8" stroke="#404040" stroke-width="0.8"/><path d="M9 1 L15 0 L15 5 L10 6Z" fill="#2A2A9A"/></svg><div class="t" style="left:28px;top:2px">Einstellungen</div></div>
<div class="ab" style="left:697px;top:585px;width:93px;height:23px;border:1px solid #919B9C;border-bottom:none;border-radius:3px 3px 0 0;background:linear-gradient(#FFFFFF,#ECEBE5 90%,#D8D2BD)"><svg style="left:8px;top:4px" width="17" height="16" viewBox="0 0 17 16"><path d="M2 3L8 8M1 6L7 10M4 1L9 6" stroke="#202020" stroke-width="1.6"/><circle cx="11" cy="10" r="2.5" fill="none" stroke="#000" stroke-width="1.2"/><path d="M12.5 12L15.5 15" stroke="#000" stroke-width="2"/></svg><div class="t" style="left:27px;top:3px">Kalibrierung</div></div>
<div class="ab" style="left:601px;top:625px;width:278px;height:61px;border:1px solid #D0D0BF;border-radius:4px"></div>
<div class="t" style="left:611px;top:618px;color:#3B6BA5;background:#FBFBFC;padding:0 2px 0 1px">Signaleingangsbereich</div>
<div class="t" style="left:619px;top:639px;">Max.</div>
<div class="t" style="left:623px;top:660px;">Min.</div>
<div class="ab" style="left:647px;top:635px;width:70px;height:19px;border:1px solid #7C8A94;background:#fff"></div>
<div class="t" style="left:647px;top:638px;width:66px;text-align:right">1k</div>
<div class="ab" style="left:647px;top:657px;width:70px;height:19px;border:1px solid #7C8A94;background:#fff"></div>
<div class="t" style="left:647px;top:659px;width:66px;text-align:right">0</div>
<div class="ab" style="left:727px;top:636px;width:142px;height:40px;border:1px solid #D0D0BF;border-radius:4px"></div>
<div class="t" style="left:737px;top:629px;color:#3B6BA5;background:#FAFAF9;padding:0 2px 0 1px">Einheit nach der Skalierung</div>
<div class="ab" style="left:738px;top:646px;width:120px;height:19px;border:1px solid #C9C7BA;background:#F4F3EE"><div class="t" style="left:0;top:2px;width:101px;text-align:center;color:#A7A6AA">mm</div><div class="ab" style="left:102px;top:1px;width:15px;height:15px;background:linear-gradient(#D7E2F8,#BCCDF0);border-radius:2px;border:1px solid #B9CBF0"><svg style="left:2px;top:4px" width="9" height="6"><path d="M1 1L4.5 4.5L8 1" stroke="#3D5180" stroke-width="2.5" fill="none"/></svg></div></div>
<div class="t" style="left:719px;top:742px;">Schaltungsart</div>
<div class="ab" style="left:719px;top:756px;width:161px;height:19px;border:1px solid #7F9DB9;background:#fff"><div class="t" style="left:0;top:2px;width:142px;text-align:center;color:#000">Differentiell</div><div class="ab" style="left:143px;top:1px;width:15px;height:15px;background:linear-gradient(#DDE6F8,#C1D3FB);border-radius:2px;border:1px solid #B9CBF0"><svg style="left:2px;top:4px" width="9" height="6"><path d="M1 1L4.5 4.5L8 1" stroke="#3D5180" stroke-width="2.5" fill="none"/></svg></div></div>
<div class="t" style="left:719px;top:781px;">Eigene Skalierungen</div>
<div class="ab" style="left:719px;top:795px;width:141px;height:19px;border:1px solid #7F9DB9;background:#fff"><div class="t" style="left:0;top:2px;width:122px;text-align:center;color:#000">Skalierung_Weg</div><div class="ab" style="left:123px;top:1px;width:15px;height:15px;background:linear-gradient(#DDE6F8,#C1D3FB);border-radius:2px;border:1px solid #B9CBF0"><svg style="left:2px;top:4px" width="9" height="6"><path d="M1 1L4.5 4.5L8 1" stroke="#3D5180" stroke-width="2.5" fill="none"/></svg></div></div>
<svg style="left:864px;top:795px" width="16" height="16" viewBox="0 0 16 16"><path d="M2 14.5L8.5 8" stroke="#1A1A1A" stroke-width="4" stroke-linecap="round"/><path d="M2.5 14L8.5 8" stroke="#E8E8E8" stroke-width="1.3"/><circle cx="10.5" cy="5.5" r="5" fill="#1A1A1A"/><circle cx="10.5" cy="5.5" r="3.2" fill="#D8D8D8"/><path d="M10 4L13.5 0.5L16 3L12.5 6.5Z" fill="#F4F3EE"/><path d="M10 4L12.5 6.5" stroke="#1A1A1A" stroke-width="1.2"/></svg>
<div class="ab" style="left:367px;top:852px;width:536px;height:52px;border:1px solid #D0D0BF;border-radius:4px"></div>
<div class="t" style="left:377px;top:846px;color:#3B6BA5;background:#F5F4F0;padding:0 2px 0 1px">Timing-Einstellungen</div>
<div class="t" style="left:379px;top:860px;">Erfassungsmodus</div>
<div class="t" style="left:627px;top:860px;color:#ACA899">Zu lesende Samples</div>
<div class="t" style="left:765px;top:860px;">Rate (Hz)</div>
<div class="ab" style="left:379px;top:874px;width:235px;height:19px;border:1px solid #7F9DB9;background:#fff"><div class="t" style="left:0;top:2px;width:216px;text-align:center;color:#000">1 Sample (HW-getaktet)</div><div class="ab" style="left:217px;top:1px;width:15px;height:15px;background:linear-gradient(#DDE6F8,#C1D3FB);border-radius:2px;border:1px solid #B9CBF0"><svg style="left:2px;top:4px" width="9" height="6"><path d="M1 1L4.5 4.5L8 1" stroke="#3D5180" stroke-width="2.5" fill="none"/></svg></div></div>
<div class="ab" style="left:625px;top:875px;width:127px;height:18px;border:1px solid #C9C7BA;background:#F4F3EE"></div>
<div class="t" style="left:625px;top:877px;width:123px;text-align:right;color:#ACA899">300</div>
<div class="ab" style="left:764px;top:875px;width:128px;height:18px;border:1px solid #7C8A94;background:#fff"></div>
<div class="t" style="left:764px;top:877px;width:123px;text-align:right">100</div>
<div class="ab" style="left:348px;top:925px;width:575px;height:1px;background:#ACA899"></div>
<div class="ab" style="left:348px;top:926px;width:575px;height:1px;background:#fff"></div>
<svg style="left:355px;top:931px" width="28" height="28" viewBox="0 0 28 28"><defs><radialGradient id="rg" cx="45%" cy="30%" r="75%"><stop offset="0" stop-color="#FF9A90"/><stop offset="0.55" stop-color="#EC3A30"/><stop offset="1" stop-color="#C01810"/></radialGradient></defs>
<circle cx="14" cy="14" r="13.3" fill="url(#rg)" stroke="#8A3028" stroke-width="0.8"/><rect x="12.5" y="5" width="3.5" height="13" fill="#FFF4F4"/><rect x="12.5" y="20" width="3.5" height="3" fill="#FFF"/></svg>
<div class="ab" style="left:856px;top:934px;width:54px;height:19px;border:1px solid #28323C;border-radius:3px;background:linear-gradient(#FFFFFF,#F2F4F8 70%,#DCE2EA)"></div>
<div class="t" style="left:859px;top:937px;">Details...</div>
<div class="ab" style="left:379px;top:890px;width:235px;height:72px;border:1px solid #000;background:#fff;z-index:5">
<div class="t" style="left:19px;top:3px">1 Sample</div>
<div class="t" style="left:19px;top:20px">1 Sample (HW-getaktet)</div>
<div class="t" style="left:19px;top:37px">N Samples</div>
<div class="t" style="left:19px;top:54px">Kontinuierlich</div>
<svg style="left:7px;top:24px" width="8" height="9"><path d="M1 4.5L3 7.5L7 0.5" stroke="#000" stroke-width="1.4" fill="none"/></svg>
</div>
<div class="ab" style="left:288px;top:976px;width:113px;height:27px;border-right:1px solid #A8A590;border-radius:0 0 3px 3px;background:linear-gradient(#ECEAE0,#F2F1EA);border-bottom:2px solid #7A7868"><svg style="left:7px;top:7px" width="16" height="16" viewBox="0 0 16 16"><path d="M2.8 -0.4 Q0.8 -0.4 0.8 1 V5.8 L-0.6 6.5 L0.8 7.2 V13.2 Q0.8 14.6 2.8 14.6" stroke="#000" fill="none" stroke-width="1.2"/>
<path d="M4.3 1.6 L6.8 -0.8 L12 3.4 L14.5 1.5" stroke="#3A6A4A" fill="none" stroke-width="0.9"/>
<path d="M4 9.5 H5.5 V5.5 H7.5 V9.5 H9.5 V5.5 H11.5 V9.5 H13.5 V5.5 H15" stroke="#14143A" fill="none" stroke-width="1"/>
<path d="M4.3 14.5 L7.5 11.3 L10.5 14.5 L13.5 11.3 L14.7 12.7" stroke="#A04050" fill="none" stroke-width="0.9"/></svg><div class="t" style="left:29px;top:9px">NI-DAQmx-Task</div></div>
<div class="ab" style="left:401px;top:977px;width:101px;height:22px;border:1px solid #919B9C;border-top:none;border-radius:0 0 3px 3px;background:linear-gradient(#F4F3EE,#E2DFD0)"><svg style="left:4px;top:3px" width="18" height="16" viewBox="0 0 18 16"><path d="M1 14L14 2" stroke="#505050" stroke-width="3"/><path d="M1 14L14 2" stroke="#E8D040" stroke-width="1.5"/><path d="M2 11Q8 8 16 10M2 13Q8 10 16 12M2 15Q8 12 16 14" stroke="#C03030" stroke-width="0.8" fill="none"/><path d="M2 12Q8 9 16 11" stroke="#3030C0" stroke-width="0.8" fill="none"/></svg><div class="t" style="left:26px;top:5px">Anschlussplan</div></div>
<div class="ab" style="left:988px;top:79px;width:1px;height:928px;background:#fff"></div>
<div class="ab" style="left:992px;top:79px;width:288px;height:927px;border-top:1px solid #716F64;border-left:1px solid #716F64;background:#fff"></div>
<div class="ab" style="left:993px;top:80px;width:287px;height:25px;background:#ECE9D8"></div>
<div class="ab" style="left:994px;top:83px;width:63px;height:22px;border-top:1px solid #fff;border-left:1px solid #fff;border-right:1px solid #716F64;border-bottom:1px solid #716F64;background:#ECE9D8">
<svg style="left:3px;top:2px" width="17" height="17" viewBox="0 0 17 17"><rect x="0.5" y="0.5" width="16" height="16" rx="2.5" fill="#2E9A3A" stroke="#8AD88A" stroke-width="0.8"/><path d="M8 3L3 8.5L8 14M3.5 8.5H14" stroke="#E0FFE0" stroke-width="2" fill="none"/></svg>
<div class="t" style="left:21px;top:4px">Zurück</div></div>
<div class="ab" style="left:1228px;top:83px;width:22px;height:22px;border-top:1px solid #fff;border-left:1px solid #fff;border-right:1px solid #716F64;border-bottom:1px solid #716F64;background:#ECE9D8"><svg style="left:2px;top:2px" width="16" height="16" viewBox="0 0 16 16"><rect x="0.5" y="4.5" width="12" height="11" fill="#fff" stroke="#B0B0B0"/><rect x="1" y="5" width="6" height="2.5" fill="#7A98B0"/><path d="M1.5 10h3M6 10h3M10 10h2.5M1.5 13.5h3M6 13.5h3M10 13.5h2.5" stroke="#A0A0A0" stroke-width="2.5"/><rect x="6.5" y="0.5" width="8.5" height="8" fill="#fff" stroke="#000" stroke-width="1"/><rect x="6" y="0" width="9.5" height="2.5" fill="#000"/></svg></div>
<div class="ab" style="left:1254px;top:83px;width:22px;height:22px;border-top:1px solid #fff;border-left:1px solid #fff;border-right:1px solid #716F64;border-bottom:1px solid #716F64;background:#ECE9D8"><svg style="left:5px;top:3px" width="12" height="14"><path d="M1.5 6.5L6 2L10.5 6.5M1.5 12L6 7.5L10.5 12" stroke="#1A1A9A" stroke-width="2.2" fill="none"/></svg></div>
<div class="ab" style="left:1261px;top:105px;width:18px;height:584px;background:#FCFCF8;border-left:1px solid #F0F0E8"></div>
<div class="ab" style="left:1263px;top:106px;width:14px;height:15px;border:1px solid #E8E8E0;border-radius:2px;background:#F0F0EA"><svg style="left:0px;top:2px" width="11" height="8"><path d="M2 6L5.5 2.5L9 6" stroke="#C8C8C0" stroke-width="2" fill="none"/></svg></div>
<div class="ab" style="left:1263px;top:672px;width:14px;height:15px;border:1px solid #E8E8E0;border-radius:2px;background:#F0F0EA"><svg style="left:0px;top:2px" width="11" height="8"><path d="M2 2L5.5 5.5L9 2" stroke="#C8C8C0" stroke-width="2" fill="none"/></svg></div>
<div class="hl" style="left:1005px;top:124px"><b style="font-size:13.4px;letter-spacing:1.1px">Spannungsmessung</b></div>
<div class="hl" style="left:1005px;top:144px">Die meisten Messgeräte dienen zur</div>
<div class="hl" style="left:1005px;top:156px">Spannungsmessung. Dabei kann es sich</div>
<div class="hl" style="left:1005px;top:168px">entweder um <span style="color:#2F8A2F;text-decoration:underline">Gleich- oder</span></div>
<div class="hl" style="left:1005px;top:180px"><span style="color:#2F8A2F;text-decoration:underline">Wechselspannungen</span> handeln.</div>
<div class="hl" style="left:1005px;top:200px">Als <i>Gleichspannungen</i> werden meist</div>
<div class="hl" style="left:1005px;top:212px">physikalische Größen ausgegeben, die sich</div>
<div class="hl" style="left:1005px;top:224px">langsam verändern, wie Temperatur, Druck</div>
<div class="hl" style="left:1005px;top:236px">oder Länge.</div>
<div class="hl" style="left:1005px;top:256px"><i>Wechselspannungen</i> sind dagegen</div>
<div class="hl" style="left:1005px;top:268px">Spannungen, die wiederholt ansteigen und</div>
<div class="hl" style="left:1005px;top:280px">fallen, wobei sich die Polarität ändert. Die</div>
<div class="hl" style="left:1005px;top:292px">meisten Starkstromleitungen führen</div>
<div class="hl" style="left:1005px;top:304px">Wechselspannungen.</div>
<div class="ab" style="left:993px;top:689px;width:287px;height:1px;background:#ECE9D8"></div>
<div class="ab" style="left:993px;top:690px;width:287px;height:1px;background:#fff"></div>
<div class="ab" style="left:993px;top:693px;width:287px;height:1px;background:#716F64"></div>
<div class="ab" style="left:993px;top:694px;width:287px;height:24px;background:#ECE9D8"></div>
<div class="ab" style="left:1228px;top:696px;width:22px;height:22px;border-top:1px solid #fff;border-left:1px solid #fff;border-right:1px solid #716F64;border-bottom:1px solid #716F64;background:#ECE9D8"><svg style="left:2px;top:2px" width="16" height="16" viewBox="0 0 16 16"><rect x="0.5" y="4.5" width="12" height="11" fill="#fff" stroke="#B0B0B0"/><rect x="1" y="5" width="6" height="2.5" fill="#7A98B0"/><path d="M1.5 10h3M6 10h3M10 10h2.5M1.5 13.5h3M6 13.5h3M10 13.5h2.5" stroke="#A0A0A0" stroke-width="2.5"/><rect x="6.5" y="0.5" width="8.5" height="8" fill="#fff" stroke="#000" stroke-width="1"/><rect x="6" y="0" width="9.5" height="2.5" fill="#000"/></svg></div>
<div class="ab" style="left:1254px;top:696px;width:22px;height:22px;border-top:1px solid #fff;border-left:1px solid #fff;border-right:1px solid #716F64;border-bottom:1px solid #716F64;background:#ECE9D8"><svg style="left:5px;top:3px" width="12" height="14"><path d="M1.5 2L6 6.5L10.5 2M1.5 7.5L6 12L10.5 7.5" stroke="#1A1A9A" stroke-width="2.2" fill="none"/></svg></div>
<div class="ab" style="left:1261px;top:718px;width:18px;height:288px;background:linear-gradient(90deg,#F3F1EC,#FEFEFB)"></div>
<div class="ab" style="left:1263px;top:719px;width:14px;height:15px;border:1px solid #C3D3FD;border-radius:2px;background:linear-gradient(135deg,#D6E2FC,#B8CCF8)"><svg style="left:0px;top:2px" width="11" height="8"><path d="M2 6L5.5 2.5L9 6" stroke="#4D6185" stroke-width="2" fill="none"/></svg></div>
<div class="ab" style="left:1263px;top:736px;width:15px;height:157px;border:1px solid #B4C8F6;border-radius:2px;background:linear-gradient(90deg,#C8D6FB,#B6CAF8)"><div class="ab" style="left:3px;top:75px;width:7px;height:7px;background:repeating-linear-gradient(#EEF4FE 0 1px,#8CB0F8 1px 2px)"></div></div>
<div class="ab" style="left:1263px;top:988px;width:14px;height:15px;border:1px solid #C3D3FD;border-radius:2px;background:linear-gradient(135deg,#D6E2FC,#B8CCF8)"><svg style="left:0px;top:2px" width="11" height="8"><path d="M2 2L5.5 5.5L9 2" stroke="#4D6185" stroke-width="2" fill="none"/></svg></div>
<div class="hl" style="left:1005px;top:733px">Je nach Konfiguration sind möglicherweise</div>
<div class="hl" style="left:1005px;top:745px">nicht alle der folgenden Timing-Modi</div>
<div class="hl" style="left:1005px;top:757px">verfügbar.</div>
<div class="hl" style="left:1005px;top:777px"><b>1 Sample</b> gibt an, dass nur ein Wert erfasst</div>
<div class="hl" style="left:1005px;top:789px">oder ausgegeben werden soll.</div>
<div class="hl" style="left:1005px;top:809px"><b>1 Sample (HW-getaktet)</b> gibt an, dass an</div>
<div class="hl" style="left:1005px;top:821px">einer bestimmten Taktflanke ein Wert</div>
<div class="hl" style="left:1005px;top:833px">erfasst oder ausgegeben werden soll.</div>
<div class="hl" style="left:1005px;top:853px"><b>N Samples</b> legt fest, dass die Sample-</div>
<div class="hl" style="left:1005px;top:865px">Anzahl der Einstellung von <b>Zu</b></div>
<div class="hl" style="left:1005px;top:877px"><b>lesende/schreibende Werte</b> entsprechen</div>
<div class="hl" style="left:1005px;top:889px">soll.</div>
<div class="hl" style="left:1005px;top:909px"><b>Kontinuierlich</b> gibt an, dass so lange Daten</div>
<div class="hl" style="left:1005px;top:921px">erfasst oder ausgegeben werden sollen, bis</div>
<div class="hl" style="left:1005px;top:933px">der Task angehalten wird.</div>
<div class="hl" style="left:1005px;top:953px"><b>Kontinuierliche Impulsfolge (HW-getaktet)</b></div>
<div class="hl" style="left:1005px;top:965px">gibt an, dass bei jeder steigenden oder</div>
<div class="hl" style="left:1005px;top:977px">fallenden Flanke des Taktsignals ein High-</div>
<div class="hl" style="left:1005px;top:989px">oder Low-Sample ausgegeben werden soll.</div>
<div class="ab" style="left:993px;top:1005px;width:268px;height:1px;background:#fff"></div>
<svg style="left:0;top:0;z-index:20" width="1280" height="1024"><ellipse cx="647" cy="898.3" rx="313.5" ry="117" fill="none" stroke="#C8141C" stroke-width="1.1"/></svg>
</body></html>
